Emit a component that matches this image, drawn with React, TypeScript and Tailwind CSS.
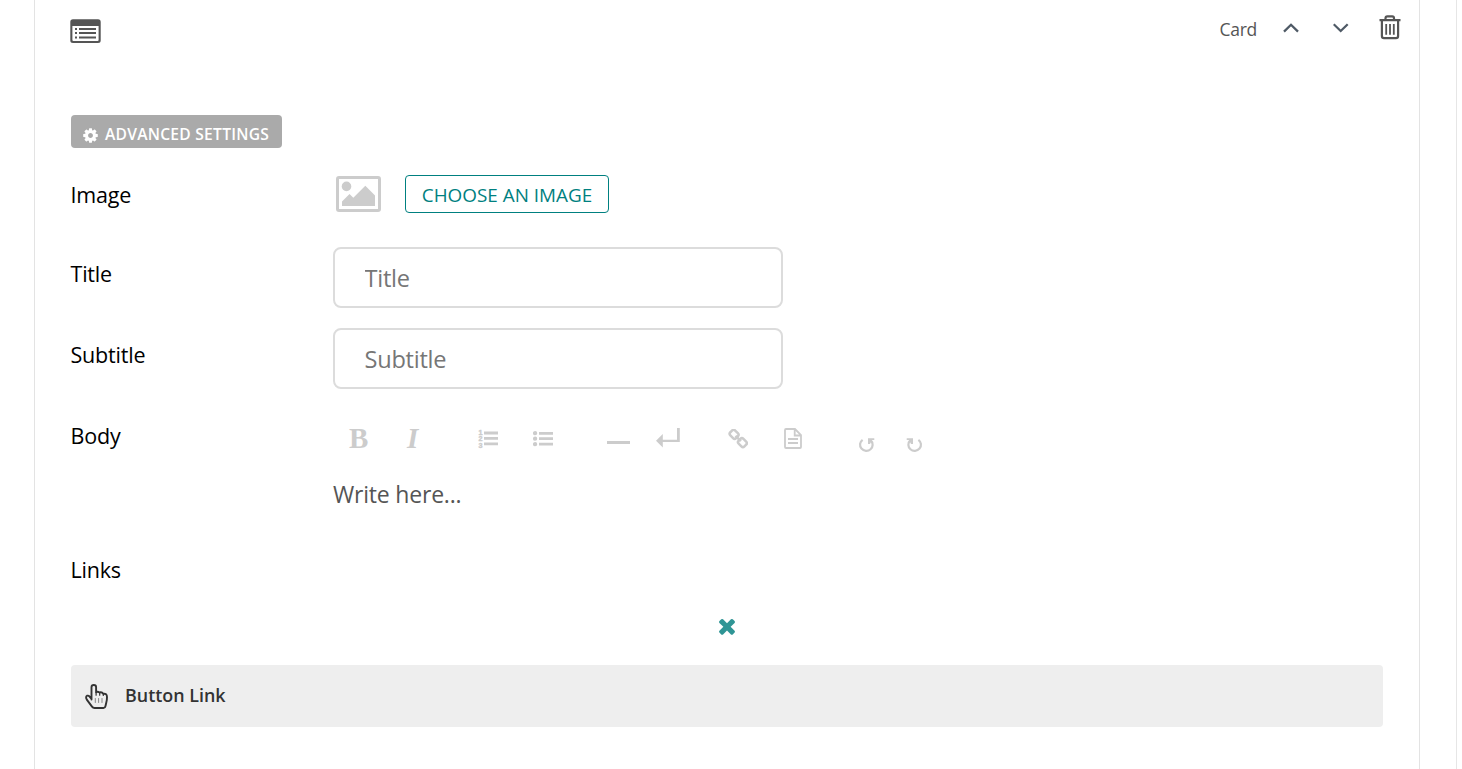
import type { ReactNode } from "react";

function ListAltIcon() {
  return (
    <svg width="31" height="25" viewBox="0 0 31 25" fill="#555">
      <path fillRule="evenodd" d="M3 0.2H28Q30.7 .2 30.7 3V21.5Q30.7 24 28 24H3Q.3 24 .3 21.5V3Q.3 .2 3 .2ZM2.4 7V21Q2.4 22 3.4 22H27.6Q28.6 22 28.6 21V7Z" />
      <path d="M5 9h2v2H5zM9 9h17v2H9zM5 13h2v2H5zM9 13h17v2H9zM5 17.6h2v2H5zM9 17.6h17v2H9z" />
    </svg>
  );
}

function TrashIcon() {
  return (
    <svg width="22" height="25" viewBox="0 0 22 25" fill="none" stroke="#555" strokeWidth="2.2">
      <path d="M.5 5.2H21.5M6.5 5V3.2Q6.5 1.3 8.4 1.3H13.2Q15 1.3 15 3.2V5M2.9 5.5V21Q2.9 23.2 5 23.2H17Q19.1 23.2 19.1 21V5.5" />
      <path strokeWidth="1.8" d="M7.2 9V19.8M11 9V19.8M14.8 9V19.8" />
    </svg>
  );
}

function Chevron({ up = false }: { up?: boolean }) {
  return (
    <svg width="17" height="10" viewBox="0 0 17 10" fill="none" stroke="#4f5a66" strokeWidth="2.3">
      <path d={up ? "M1 8.6 8 1.8 15 8.6" : "M.7 1.2 7.7 8 14.7 1.2"} />
    </svg>
  );
}

function CogIcon() {
  return (
    <svg width="17" height="17" viewBox="0 0 1792 1792" fill="#fff">
      <path d="M1152 896q0-106-75-181t-181-75-181 75-75 181 75 181 181 75 181-75 75-181zm512-109v222q0 12-8 23t-20 13l-185 28q-19 54-39 91 35 50 107 138 10 12 10 25t-9 23q-27 37-99 108t-94 71q-12 0-26-9l-138-108q-44 23-91 38-16 136-29 186-7 28-36 28h-222q-14 0-24.5-8.5t-11.5-21.5l-28-184q-49-16-90-37l-141 107q-10 9-25 9-14 0-25-11-126-114-165-168-7-10-7-23 0-12 8-23 15-21 51-66.5t54-70.5q-27-50-41-99l-183-27q-13-2-21-12.5t-8-23.5v-222q0-12 8-23t19-13l186-28q14-46 39-92-40-57-107-138-10-12-10-24 0-10 9-23 26-36 98.5-107.5t94.5-71.5q13 0 26 10l138 107q44-23 91-38 16-136 29-186 7-28 36-28h222q14 0 24.5 8.5t11.5 21.5l28 184q49 16 90 37l142-107q9-9 24-9 13 0 25 10 129 119 165 170 7 8 7 22 0 12-8 23-15 21-51 66.5t-54 70.5q26 50 41 98l183 28q13 2 21 12.5t8 23.5z" />
    </svg>
  );
}

function ImageIcon() {
  return (
    <svg width="45" height="36" viewBox="0 0 45 36" fill="#ccc">
      <path fillRule="evenodd" d="M3 0H42Q45 0 45 3V33Q45 36 42 36H3Q0 36 0 33V3Q0 0 3 0ZM3 3V33H42V3Z" />
      <circle cx="10.5" cy="10.4" r="4.8" />
      <path d="M6 30V25.5L13.5 18 17.3 21.8 29.3 9.8 39 19.5V30Z" />
    </svg>
  );
}

function OrderedListIcon() {
  return (
    <svg className="overflow-visible" width="20" height="20" viewBox="0 0 20 20" fill="#ccc">
      <path d="M6 2.6h14v2.8H6zM6 8h14v2.8H6zM6 13.4h14v2.8H6z" />
      <g fontFamily="Liberation Sans" fontWeight="700" fontSize="7.2" stroke="#ccc" strokeWidth="0.4">
        <text x="0.5" y="5.8">1</text>
        <text x="0.5" y="12.2">2</text>
        <text x="0.5" y="18.6">3</text>
      </g>
    </svg>
  );
}

function BulletListIcon() {
  return (
    <svg width="20" height="16" viewBox="0 0 20 16" fill="#ccc">
      <path d="M6 .9h14v2.8H6zM6 6.3h14v2.8H6zM6 11.8h14v2.8H6z" />
      <circle cx="2.1" cy="2.2" r="2.15" />
      <circle cx="2.1" cy="7.7" r="2.15" />
      <circle cx="2.1" cy="13.2" r="2.15" />
    </svg>
  );
}

function ReturnIcon() {
  return (
    <svg width="24" height="20" viewBox="0 0 24 20" fill="#ccc">
      <path d="M21 0H23.8V14H6.8V19.5L0 12.8 6.8 6V11.8H21Z" />
    </svg>
  );
}

function LinkIcon() {
  return (
    <svg width="20" height="20" viewBox="0 0 20 20" fill="none" stroke="#ccc" strokeWidth="2.5">
      <rect x="-4.1" y="-3.4" width="8.2" height="6.8" rx="2.2" transform="translate(6.1 5.3) rotate(45)" />
      <rect x="-4.1" y="-3.4" width="8.2" height="6.8" rx="2.2" transform="translate(14.4 13.6) rotate(45)" />
      <path d="M7.5 6.8 12.9 12.2" />
    </svg>
  );
}

function FileIcon() {
  return (
    <svg width="18" height="21" viewBox="0 0 18 21" fill="none" stroke="#ccc" strokeWidth="1.8">
      <path d="M1 2Q1 1 2 1H11L17 7V19Q17 20 16 20H2Q1 20 1 19ZM10.7 1V7.5H17M4 11H14M4 15H14" />
    </svg>
  );
}

function TurnIcon({ flip = false }: { flip?: boolean }) {
  return (
    <svg width="17" height="15" viewBox="0 0 17 15" fill="none" stroke="#ccc" strokeWidth="2.2">
      <g transform={flip ? "translate(17 0) scale(-1 1)" : undefined}>
        <path d="M4.6 1.8A6.3 6.1 0 1 0 12.8 2.4" />
        <path fill="#ccc" stroke="none" d="M10 .2H16.3V2.1H14L12 6H10Z" />
      </g>
    </svg>
  );
}

function CloseIcon() {
  return (
    <svg width="24" height="24" viewBox="0 0 1792 1792" fill="#2f9595">
      <path d="M1490 1322q0 40-28 68l-136 136q-28 28-68 28t-68-28l-294-294-294 294q-28 28-68 28t-68-28l-136-136q-28-28-28-68t28-68l294-294-294-294q-28-28-28-68t28-68l136-136q28-28 68-28t68 28l294 294 294-294q28-28 68-28t68 28l136 136q28 28 28 68t-28 68l-294 294 294 294q28 28 28 68z" />
    </svg>
  );
}

function HandIcon() {
  return (
    <svg width="23" height="25" viewBox="0 0 23 25" fill="none" stroke="#333" strokeWidth="1.9" strokeLinejoin="round" strokeLinecap="round">
      <path d="M6.5 15.5V3.3Q6.5 1 8.8 1Q11.1 1 11.1 3.3V8.2Q12.5 7.2 14.6 8.5Q17 7.8 18.2 9.8Q22 9.3 22 13Q22 16 21.3 18.5L20.5 22Q20.1 24 18.5 24H9.5Q8 24 7 22.6L1.8 15.6Q.2 12.7 2.2 11.7Q3.5 11.3 4.6 12.6L6.5 15" />
      <path strokeWidth="1.2" d="M11.1 8.5V11.2M14.7 8.5V11.2M18.3 9.8V11.5" />
      <path strokeWidth="1" stroke="#888" d="M10.3 14.5V18.5M13.6 14.5V18.5M17 14.5V18.5" />
    </svg>
  );
}

function Row({ label, className, labelClass = "pt-3", children }: { label: string; className: string; labelClass?: string; children?: ReactNode }) {
  return (
    <div className={`flex ${className}`}>
      <div className={`-ml-[0.5px] w-[262.5px] shrink-0 text-[21.5px] leading-[30px] tracking-[-0.2px] text-black ${labelClass}`}>{label}</div>
      {children}
    </div>
  );
}

function Field({ name }: { name: string }) {
  return (
    <input
      placeholder={name}
      className="h-[61px] w-[450px] rounded-lg border-2 border-[#dcdcdc] px-[29.5px] text-[23.6px] tracking-[-0.25px] placeholder:text-[#767676] outline-none"
    />
  );
}

export default function App() {
  return (
    <div className="flex h-[769px] w-[1462px] overflow-hidden bg-white font-['Open_Sans','Noto_Sans',sans-serif]">
      <div className="h-full w-[1457px] border-r border-[#e6e6e6] pl-[34px]">
        <section className="h-full w-[1386px] border-x border-[#e3e3e3] pl-9">
          <header className="flex h-[115px] items-start pr-[18px]">
            <div className="-ml-px mt-[19px]"><ListAltIcon /></div>
            <span className="ml-auto mt-[17px] text-[17.5px] leading-6 tracking-[-0.25px] text-[#555]">Card</span>
            <button className="ml-[26px] mt-[23px]"><Chevron up /></button>
            <button className="ml-[33px] mt-[23px]"><Chevron /></button>
            <button className="ml-[29px] mt-[15px]"><TrashIcon /></button>
          </header>
          <button className="flex h-[33px] w-[211px] items-center rounded-[4px] bg-[#aaa] pl-[11px] pt-[3px] text-white">
            <span className="mt-1"><CogIcon /></span>
            <span className="ml-1.5 mt-px whitespace-nowrap text-[15.6px] leading-6 font-semibold tracking-[0.25px]">ADVANCED SETTINGS</span>
          </button>
          <Row label="Image" className="mt-[27px] h-[38px]" labelClass="pt-[5px]">
            <div className="ml-[3px] mt-px"><ImageIcon /></div>
            <button className="ml-6 h-[38px] w-[204px] whitespace-nowrap rounded-[4px] border border-[#008080] pt-0.5 text-[18.9px] text-[#008080]">CHOOSE AN IMAGE</button>
          </Row>
          <Row label="Title" className="mt-[34px] h-[61px]"><Field name="Title" /></Row>
          <Row label="Subtitle" className="mt-5 h-[61px]"><Field name="Subtitle" /></Row>
          <Row label="Body" className="mt-5 h-[134px]">
            <div>
              <div className="flex h-[61px] items-start pl-4 pt-[19px] text-[#ccc]">
                <b className="w-[18px] font-['Liberation_Serif'] text-[29px] leading-5">B</b>
                <b className="ml-10 w-3 font-['Liberation_Serif'] text-[29px] italic leading-5">I</b>
                <span className="ml-[59px] mt-px"><OrderedListIcon /></span>
                <span className="ml-[35px] mt-[3px]"><BulletListIcon /></span>
                <span className="ml-[54px] mt-[13px] h-[3px] w-[23px] bg-[#ccc]" />
                <span className="ml-[26px]"><ReturnIcon /></span>
                <span className="ml-12 mt-px"><LinkIcon /></span>
                <span className="ml-[36px]"><FileIcon /></span>
                <span className="ml-14 mt-[10px]"><TurnIcon /></span>
                <span className="ml-[31px] mt-[10px]"><TurnIcon flip /></span>
              </div>
              <div className="mt-2 text-[23px] leading-[32px] tracking-[-0.2px] text-[#555]">Write here...</div>
            </div>
          </Row>
          <Row label="Links" className="h-[71px]" />
          <div className="flex h-[51px] w-[1312px] justify-center"><CloseIcon /></div>
          <button className="flex h-[62px] w-[1312px] items-center rounded-[4px] bg-[#eee] pl-3.5 text-[#333]">
            <HandIcon />
            <span className="-mt-0.5 ml-[17px] text-[17.9px] font-semibold">Button Link</span>
          </button>
        </section>
      </div>
    </div>
  );
}
